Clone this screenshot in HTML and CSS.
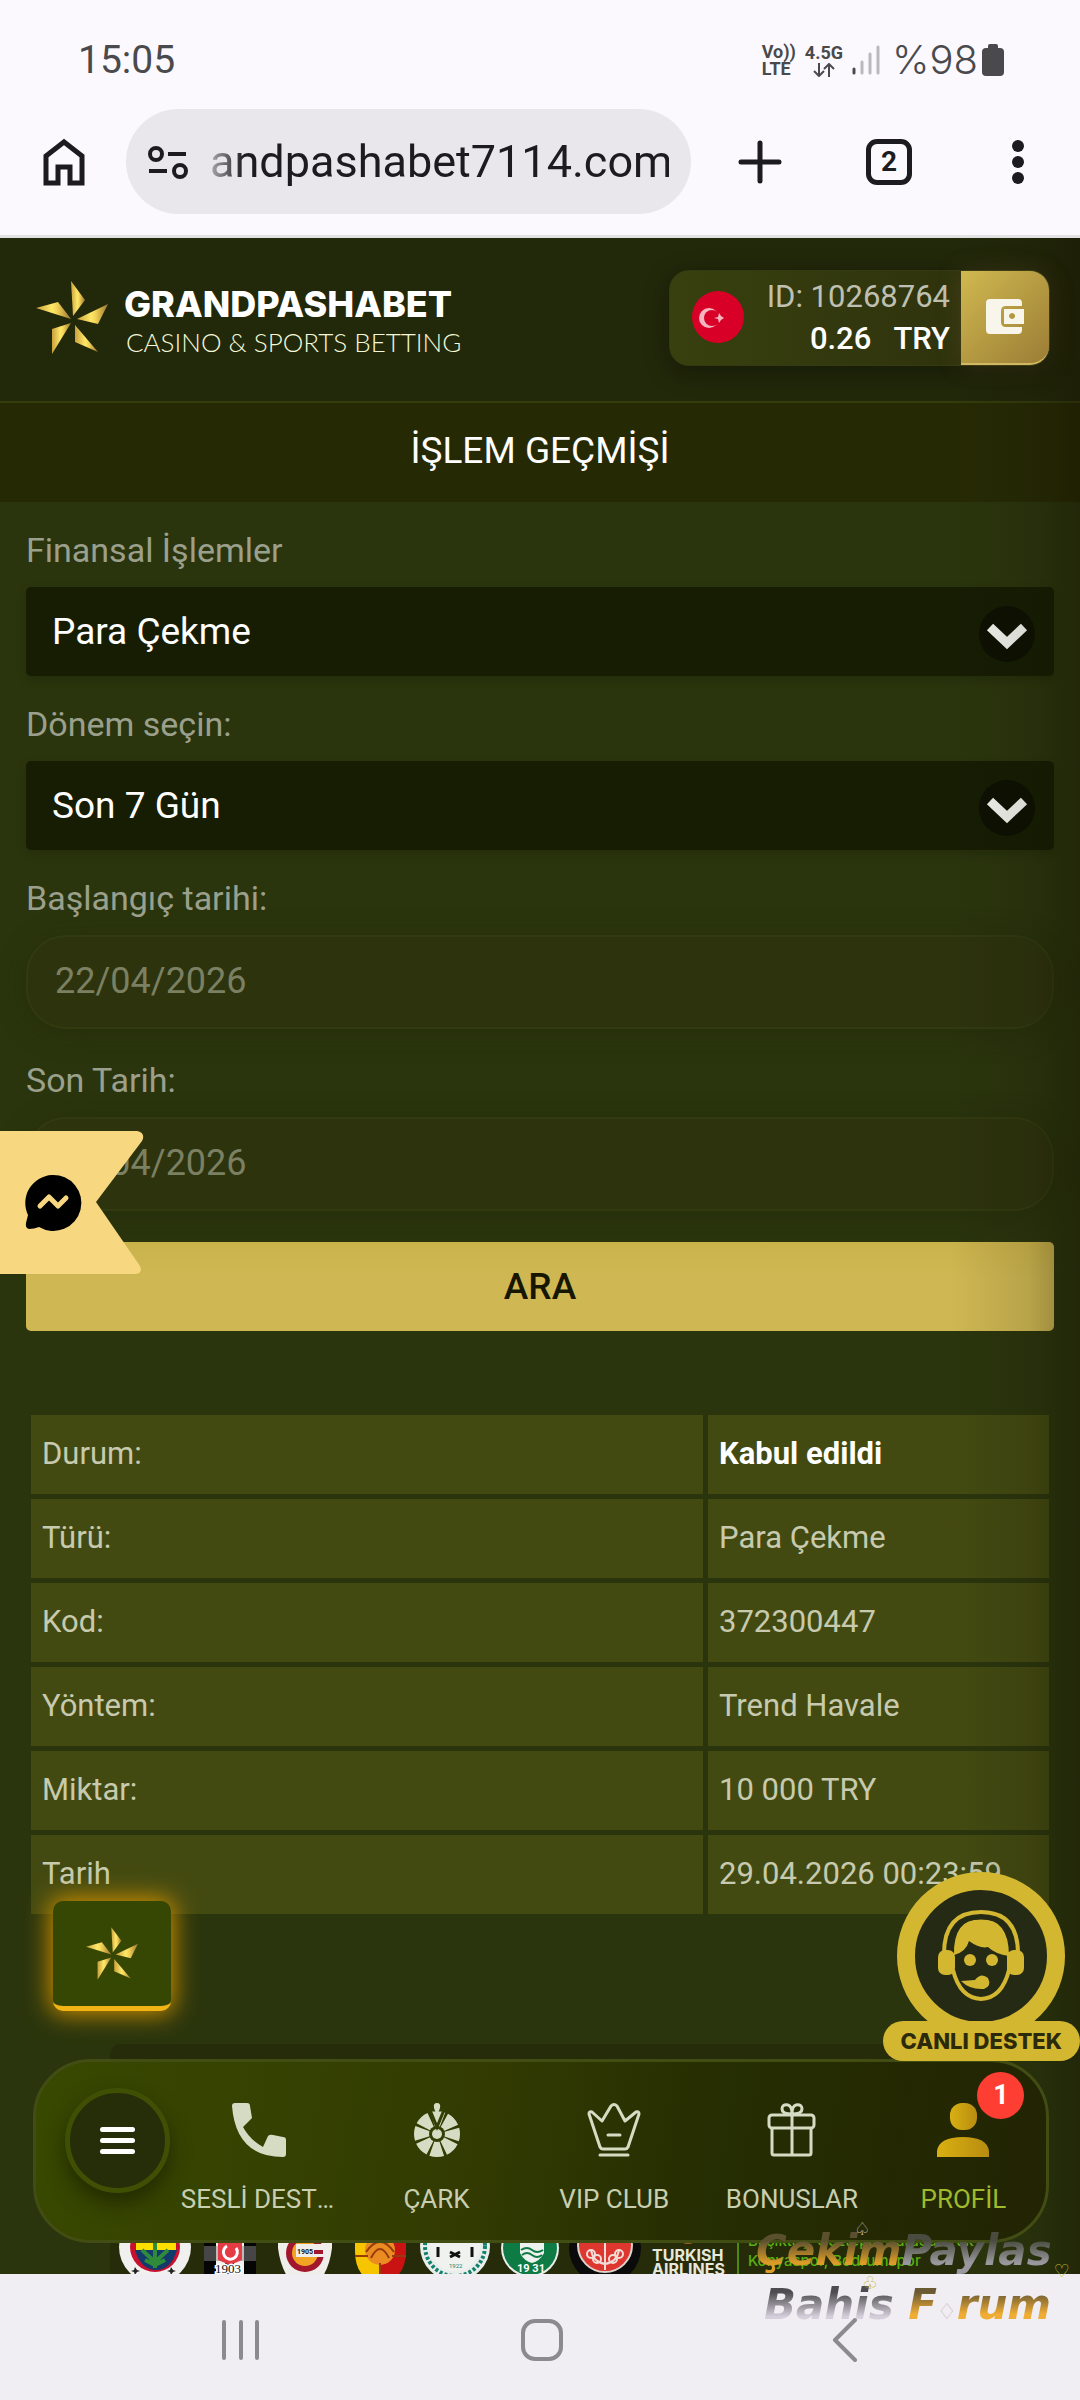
FILE: index.html
```html
<!DOCTYPE html>
<html lang="tr">
<head>
  <meta charset="utf-8">
  <title>İşlem Geçmişi</title>
  <link rel="stylesheet" href="styles.css">
</head>
<body>
  <!-- shared shapes -->
  <svg class="defs" width="0" height="0">
    <defs>
      <linearGradient id="gold" x1="0" y1="0" x2="1" y2="0">
        <stop offset="0" stop-color="#c9a03c"/>
        <stop offset="0.45" stop-color="#ffe868"/>
        <stop offset="0.6" stop-color="#f3d355"/>
        <stop offset="1" stop-color="#9a7430"/>
      </linearGradient>
      <linearGradient id="person" x1="0" y1="0" x2="1" y2="0">
        <stop offset="0" stop-color="#d9b012"/>
        <stop offset="1" stop-color="#b88c10"/>
      </linearGradient>
      <symbol id="pinwheel" viewBox="0 0 72 73">
        <path fill="url(#gold)" d="M35 0L49 19 37 35z"/>
        <path fill="url(#gold)" d="M0 27L22 21 35 38z"/>
        <path fill="url(#gold)" d="M72 23L62 43 41 38z"/>
        <path fill="url(#gold)" d="M16 48L35 42 16 73z"/>
        <path fill="url(#gold)" d="M39 44L62 71 39 61z"/>
      </symbol>
    </defs>
  </svg>

  <div class="status">
    <span class="clock">15:05</span>
    <div class="status-icons">
      <span class="tiny">Vo))<br>LTE</span>
      <span class="tiny">4.5G
        <svg width="24" height="14" viewBox="0 0 24 14" fill="none" stroke="#4a4a4c" stroke-width="2"><path d="M7 0v12M2 8l5 5 5-5M17 14V2M12 6l5-5 5 5"/></svg>
      </span>
      <svg width="28" height="32" viewBox="0 0 28 32" stroke-width="3" stroke-linecap="round"><path stroke="#4a4a4c" d="M2 25v4"/><path stroke="#b9b9bd" d="M10 18v11M18 10v19M26 3v26"/></svg>
      <span class="percent">%98</span>
      <svg class="battery" width="22" height="32" viewBox="0 0 22 32" fill="#4a4a4c"><rect x="6" width="10" height="8" rx="2"/><rect y="4" width="22" height="28" rx="4"/></svg>
    </div>
  </div>

  <div class="browser">
    <button class="tool" aria-label="Ana sayfa"><svg width="44" height="48" viewBox="0 0 44 48" fill="none" stroke="#1b1b20" stroke-width="5"><path d="M4 45V18L22 4l18 14v27H28V29H16v16z"/></svg></button>
    <div class="address">
      <svg width="40" height="34" viewBox="0 0 40 34" fill="none" stroke="#1b1b20" stroke-width="4"><circle cx="8" cy="9" r="6"/><path d="M20 9h18M1 26h18"/><circle cx="32" cy="26" r="6"/></svg>
      <input type="text" aria-label="Adres" value="andpashabet7114.com">
    </div>
    <div class="tools">
      <button class="tool" aria-label="Yeni sekme"><svg width="44" height="44" viewBox="0 0 44 44" stroke="#1b1b20" stroke-width="5" stroke-linecap="round"><path d="M22 3v38M3 22h38"/></svg></button>
      <button class="tool tabs">2</button>
      <button class="tool" aria-label="Menü"><svg width="44" height="44" viewBox="0 0 44 44" fill="#1b1b20"><circle cx="22" cy="6" r="6"/><circle cx="22" cy="22" r="6"/><circle cx="22" cy="38" r="6"/></svg></button>
    </div>
  </div>

  <div class="site">
    <header class="header">
      <a class="logo" href="#">
        <svg width="72" height="73"><use href="#pinwheel"/></svg>
        <span>
          <span class="logo-name">GRANDPASHABET</span>
          <span class="logo-sub">CASINO &amp; SPORTS BETTING</span>
        </span>
      </a>
      <div class="account">
        <svg width="53" height="53" viewBox="0 0 53 53"><circle cx="26" cy="26" r="26" fill="#d80027"/><circle cx="17" cy="27" r="10" fill="#f5b5c0"/><circle cx="20" cy="27" r="8" fill="#d80027"/><path fill="#f5b5c0" d="M22 27l4-1 1-4 2 3 3 2-3 2-2 3-1-4z"/></svg>
        <div class="account-text">
          <span class="account-id">ID: 10268764</span>
          <span class="balance"><b>0.26</b><b>TRY</b></span>
        </div>
        <button class="wallet" aria-label="Cüzdan"><svg width="38" height="35" viewBox="0 0 38 35"><path fill="#f8f5ea" d="M4 0h28q4 0 4 4v3H20q-5 0-5 5v11q0 5 5 5h16v3q0 4-4 4H4q-4 0-4-4V4q0-4 4-4z"/><path fill="#f8f5ea" fill-rule="evenodd" d="M18 10h20v15H18zM26 14a3 3 0 1 0 .1 0z"/></svg></button>
      </div>
    </header>

    <h1 class="title">İŞLEM GEÇMİŞİ</h1>

    <main class="main">
      <form class="filter">
        <label for="type">Finansal İşlemler</label>
        <div class="select">
          <select id="type"><option>Para Çekme</option></select>
          <svg width="56" height="56" viewBox="0 0 56 56"><circle cx="28" cy="28" r="28" fill="#0d1002"/><path fill="none" stroke="#f4f5f0" stroke-width="9" d="M11 21l17 16 17-16"/></svg>
        </div>

        <label for="period">Dönem seçin:</label>
        <div class="select">
          <select id="period"><option>Son 7 Gün</option></select>
          <svg width="56" height="56" viewBox="0 0 56 56"><circle cx="28" cy="28" r="28" fill="#0d1002"/><path fill="none" stroke="#f4f5f0" stroke-width="9" d="M11 21l17 16 17-16"/></svg>
        </div>

        <label for="start">Başlangıç tarihi:</label>
        <input class="date" id="start" type="text" value="22/04/2026">

        <label for="end">Son Tarih:</label>
        <input class="date" id="end" type="text" value="29/04/2026">

        <button class="search" type="button">ARA</button>
      </form>

      <table class="history">
        <tr><td>Durum:</td><td><b>Kabul edildi</b></td></tr>
        <tr><td>Türü:</td><td>Para Çekme</td></tr>
        <tr><td>Kod:</td><td>372300447</td></tr>
        <tr><td>Yöntem:</td><td>Trend Havale</td></tr>
        <tr><td>Miktar:</td><td>10 000 TRY</td></tr>
        <tr><td>Tarih</td><td>29.04.2026 00:23:59</td></tr>
      </table>
    </main>

    <footer class="sponsors">
      <svg width="75" height="75" viewBox="0 0 75 75"><circle cx="37" cy="37" r="36" fill="#f0f0ee"/><circle cx="37" cy="37" r="25" fill="#c8102e"/><path fill="#ffe000" d="M18 22h40v18H18z"/><path fill="#123a6b" d="M17 40h42q-6 20-21 20T17 40z"/><path fill="none" stroke="#2f8b3a" stroke-width="4" d="M37 30v28M24 40l13 12 13-12M27 50l10 5 10-5"/><path fill="#222" d="M17 57l2 3 3 1-3 1-2 3-1-3-3-1 3-1zM53 57l2 3 3 1-3 1-2 3-1-3-3-1 3-1z"/></svg>
      <svg width="75" height="75" viewBox="0 0 75 75"><rect x="11" y="6" width="52" height="69" rx="14" fill="#050505"/><path fill="#f0f0f0" d="M23 6h9v69h-9zM41 6h10v69H41z"/><path fill="#888" opacity=".5" d="M11 36h52v15H11z"/><path fill="#e43b44" d="M25 28h24v22l-12 5-12-5z"/><path fill="none" stroke="#fff" stroke-width="3" d="M43 38a7 7 0 1 1-9-2"/><text x="22" y="63" font-family="Liberation Serif" font-size="13" fill="#111" stroke="#fff" stroke-width="3" paint-order="stroke">1903</text></svg>
      <svg width="75" height="75" viewBox="0 0 75 75"><path fill="#f0eeea" d="M10 20h54v18q-3 24-16 37H26Q13 62 10 38z"/><circle cx="37" cy="43" r="19" fill="#a3172c"/><circle cx="37" cy="43" r="13" fill="#f3a324"/><path fill="#f0eeea" d="M28 34h30v13H28z"/><path fill="none" stroke="#a3172c" stroke-width="4" d="M46 42h9"/><text x="29" y="44" font-family="Roboto" font-weight="700" font-size="7" fill="#111">1905</text></svg>
      <svg width="75" height="75" viewBox="0 0 75 75"><path fill="#f7c400" d="M12 20h25v55q-25-6-25-34z"/><path fill="#c91212" d="M37 20h26v21q0 28-26 34z"/><circle cx="37" cy="40" r="15" fill="#eb8c22"/><path fill="none" stroke="#983b0c" stroke-width="2" d="M12 46h13M49 46h14M37 53v20M23 42q14-20 28 0M28 48q9-18 18 0"/></svg>
      <svg width="75" height="75" viewBox="0 0 75 75"><circle cx="37" cy="36" r="35" fill="#e9eeec"/><circle cx="37" cy="36" r="30" fill="none" stroke="#13826a" stroke-width="4" stroke-dasharray="3 2"/><circle cx="37" cy="36" r="25" fill="#f0f2f0"/><path fill="none" stroke="#111" stroke-width="3" d="M20 37v10M54 37v10M32 42l10 5M42 42l-10 5"/><text x="31" y="58" font-family="Roboto" font-size="6" fill="#13826a">1922</text></svg>
      <svg width="75" height="75" viewBox="0 0 75 75"><circle cx="37" cy="38" r="29" fill="#e9eeec"/><circle cx="37" cy="38" r="27" fill="#0e7b45"/><path fill="#eef2ee" d="M27 33h24v10q-4 8-12 10-8-2-12-10z"/><path fill="none" stroke="#0e7b45" stroke-width="2" d="M28 40q6-4 11 0t11 0M29 45q5-4 10 0t10 0"/><text x="24" y="62" font-family="Roboto" font-weight="700" font-size="11" fill="#fff">19 31</text></svg>
      <svg width="75" height="75" viewBox="0 0 75 75"><circle cx="37" cy="38" r="36" fill="#0b0b0b"/><circle cx="37" cy="35" r="27" fill="#dd3730" stroke="#ded3cc" stroke-width="2"/><path fill="none" stroke="#f4dcd6" stroke-width="2" d="M37 30v30M37 54q-12-2-14-14M37 54q12-2 14-14"/><g fill="none" stroke="#f4dcd6" stroke-width="2"><circle cx="23" cy="44" r="4"/><circle cx="29" cy="49" r="4"/><circle cx="51" cy="44" r="4"/><circle cx="45" cy="49" r="4"/></g></svg>
      <div class="airline"><i></i>TURKISH<br>AIRLINES</div>
      <div class="partners">Beşiktaş, Göztepe, Karagümrük<br>Konyaspor, Bodrumspor<br><span>Resmi Sponsoru</span></div>
    </footer>

    <a class="messenger" href="#" aria-label="Messenger">
      <svg width="144" height="143" viewBox="0 0 144 143"><path fill="#f7d780" d="M0 0h137q9 2 5 10L96 71l44 64q3 7-4 8H0z"/><path fill="#000" d="M52 44a28 28 0 1 1-13 52q-5 2-10 2-4-1-3-6l2-8A28 28 0 0 1 52 44z"/><path fill="none" stroke="#f7d780" stroke-width="5" stroke-linecap="round" stroke-linejoin="round" d="M40 75l9-9 9 9 8-8"/></svg>
    </a>

    <button class="spin" aria-label="Çark"><svg width="52" height="53"><use href="#pinwheel"/></svg></button>

    <a class="support" href="#">
      <svg width="168" height="168" viewBox="0 0 168 168">
        <circle cx="84" cy="84" r="75" fill="#252a15" stroke="#d3b731" stroke-width="18"/>
        <path fill="#d3b731" d="M57 83q-1-36 27-36t28 37q-14-2-21-9-8 2-19-6-3 11-15 14z"/>
        <path fill="none" stroke="#d3b731" stroke-width="4" d="M47 82q0-42 37-42t37 42"/>
        <path fill="none" stroke="#252a15" stroke-width="3" d="M52 78q1-32 32-32t32 32"/>
        <rect x="41" y="78" width="17" height="25" rx="7" fill="#d3b731"/>
        <rect x="110" y="78" width="17" height="25" rx="7" fill="#d3b731"/>
        <path fill="none" stroke="#d3b731" stroke-width="4" d="M56 98q7 28 28 29 21-1 28-29V80"/>
        <circle cx="73" cy="88" r="6" fill="#d3b731"/><circle cx="95" cy="88" r="6" fill="#d3b731"/>
        <path fill="#d3b731" d="M64 109l14-1q6-8 13-2 4 8-4 11-14 1-23-8z"/>
      </svg>
      <span>CANLI DESTEK</span>
    </a>

    <nav class="nav">
      <button class="menu" aria-label="Menü"><i></i><i></i><i></i></button>
      <a href="#">
        <svg width="54" height="54" viewBox="0 0 54 54" fill="#d6dcc4"><path d="M3 0h12q3 0 3 3l2 12-9 9q7 13 20 20l5-11q2-2 5-1l10 2q3 0 3 3v14q0 3-3 3Q4 54 0 3 0 0 3 0z"/></svg>
        <span>SESLİ DESTEK</span>
      </a>
      <a href="#">
        <svg width="54" height="54" viewBox="0 0 54 54"><circle cx="27" cy="31" r="15" fill="none" stroke="#d6dcc4" stroke-width="16" stroke-dasharray="9.8 2" stroke-dashoffset="4.9"/><circle cx="27" cy="31" r="8" fill="#323f05"/><circle cx="27" cy="31" r="5" fill="#d6dcc4"/><path fill="#d6dcc4" stroke="#323f05" stroke-width="3" d="M27 24l-7-17h14z"/><path fill="#d6dcc4" d="M27 0q4 0 3 5l-3 8-3-8q-1-5 3-5z"/></svg>
        <span>ÇARK</span>
      </a>
      <a href="#">
        <svg width="54" height="54" viewBox="0 0 54 54" fill="none" stroke="#d6dcc4" stroke-width="3" stroke-linejoin="round" stroke-linecap="round"><path d="M13 44L2 11q0-3 3-2l10 9 9-15q3-3 6 0l8 15 11-9q3-1 3 2L41 44q-1 2-3 2H16q-2 0-3-2zM13 52h28M21 32h12"/></svg>
        <span>VIP CLUB</span>
      </a>
      <a href="#">
        <svg width="54" height="54" viewBox="0 0 54 54" fill="none" stroke="#d6dcc4" stroke-width="3"><rect x="4" y="12" width="45" height="13" rx="3"/><path d="M7 25v25q0 2 2 2h35q2 0 2-2V25M27 12v40M27 11q-10 0-10-5t6-4q4 1 4 9zM27 11q10 0 10-5t-6-4q-4 1-4 9z"/></svg>
        <span>BONUSLAR</span>
      </a>
      <a class="active" href="#">
        <svg width="54" height="54" viewBox="0 0 54 54" fill="url(#person)"><rect x="14" y="0" width="27" height="27" rx="12"/><path d="M1 54V48Q3 34 27 34t26 14v6z"/></svg>
        <span>PROFİL</span>
        <b class="badge">1</b>
      </a>
    </nav>
  </div>

  <div class="system">
    <button aria-label="Son uygulamalar"><svg width="44" height="44" viewBox="0 0 44 44" stroke="#8c8a8e" stroke-width="4" stroke-linecap="round"><path d="M5 4v36M22 4v36M38 4v36"/></svg></button>
    <button aria-label="Ana ekran"><svg width="44" height="44" viewBox="0 0 44 44" fill="none" stroke="#8c8a8e" stroke-width="4"><rect x="3" y="3" width="38" height="38" rx="12"/></svg></button>
    <button aria-label="Geri"><svg width="44" height="44" viewBox="0 0 44 44" fill="none" stroke="#8c8a8e" stroke-width="4" stroke-linecap="round" stroke-linejoin="round"><path d="M34 2L14 22l20 20"/></svg></button>
    <div class="stamp">
      <p><span class="amber">Çekim</span><span class="grey">Paylas</span></p>
      <p class="second"><span class="silver">Bahis</span> <span class="bronze">F</span><small>♢</small><span class="bronze">rum</span></p>
      <i class="suit spade">♤</i>
      <i class="suit club">♧</i>
      <i class="suit heart">♡</i>
    </div>
  </div>
</body>
</html>
```

FILE: styles.css
```css
* {
  box-sizing: border-box;
}
body {
  margin: 0;
  min-height: 100vh;
  display: flex;
  flex-direction: column;
  font-family: Roboto, "Open Sans", sans-serif;
  background: #2a350d;
  color: #fff;
}
button {
  border: 0;
  padding: 0;
  background: none;
  font-family: inherit;
}
a {
  color: inherit;
  text-decoration: none;
}
svg {
  display: block;
  flex: none;
}
.defs {
  position: absolute;
}

/* phone status bar */
.status {
  display: flex;
  justify-content: space-between;
  padding: 37px 76px 0 78px;
  background: #fbf9fe;
  color: #4a4a4c;
}
.clock {
  font-size: 39px;
  line-height: 46px;
}
.percent {
  margin-left: 3px;
  font: 300 40px/46px Inter, sans-serif;
}
.status-icons {
  display: flex;
  align-items: center;
  gap: 9px;
}
.battery {
  margin-left: -5px;
}
.tiny {
  font-size: 18px;
  font-weight: 700;
  line-height: 17px;
}
.tiny svg {
  margin: 2px auto 0;
}

/* browser toolbar */
.browser {
  display: flex;
  align-items: center;
  padding: 26px 40px 21px 42px;
  background: #fbf9fe;
  border-bottom: 3px solid #e2e2e3;
}
.address {
  flex: 1;
  min-width: 0;
  display: flex;
  align-items: center;
  gap: 22px;
  height: 105px;
  margin: 0 47px 0 40px;
  padding: 0 22px;
  border-radius: 53px;
  background: #e9e7ec;
}
.address input {
  flex: 1;
  min-width: 0;
  border: 0;
  padding: 0;
  background: none;
  color: #1b1b20;
  font: 45px Roboto, sans-serif;
  text-align: right;
  -webkit-mask-image: linear-gradient(to right, rgba(0,0,0,.3), #000 34px);
  mask-image: linear-gradient(to right, rgba(0,0,0,.3), #000 34px);
}
.tools {
  display: flex;
  gap: 84px;
}
.tabs {
  width: 46px;
  height: 46px;
  border: 5px solid #1b1b20;
  border-radius: 11px;
  color: #1b1b20;
  font-size: 28px;
  font-weight: 700;
  line-height: 36px;
}

/* site */
.site {
  flex: 1;
  display: flex;
  flex-direction: column;
  position: relative;
  overflow: hidden;
}
.site::before {
  content: "";
  position: absolute;
  top: 0;
  right: 0;
  bottom: 0;
  width: 130px;
  background: linear-gradient(to right, transparent, rgba(20,16,0,.12) 60%, rgba(20,16,0,.36));
  pointer-events: none;
  z-index: 1;
}
.header {
  display: flex;
  justify-content: space-between;
  align-items: center;
  height: 165px;
  padding: 0 30px 4px 36px;
  background: #22280a;
  border-bottom: 2px solid #343c0c;
}
.logo {
  display: flex;
  align-items: center;
  gap: 16px;
}
.logo-name, .logo-sub {
  display: block;
}
.logo-name {
  padding-top: 6px;
  font: 800 36px/42px Inter, sans-serif;
}
.logo-sub {
  padding-left: 2px;
  font: 300 26px/34px Lato, sans-serif;
  color: #f4f8d8;
}
.account {
  position: relative;
  z-index: 2;
  display: flex;
  align-items: center;
  height: 96px;
  padding-left: 22px;
  border: 1px solid #343a12;
  border-radius: 20px;
  background: linear-gradient(to right, #38400e, #2c2f0d);
  box-shadow: 0 6px 24px rgba(0,0,0,.35);
}
.account-text {
  display: flex;
  flex-direction: column;
  margin: 0 11px 0 22px;
  font-size: 31px;
  line-height: 42px;
  text-align: right;
}
.account-id {
  color: #bfc0b2;
}
.balance {
  display: flex;
  justify-content: flex-end;
  gap: 22px;
}
.balance b {
  font-weight: 500;
}
.wallet {
  display: flex;
  align-items: center;
  justify-content: center;
  width: 88px;
  height: 94px;
  border-radius: 0 19px 19px 0;
  border-bottom: 2px solid #d3b863;
  background: linear-gradient(135deg, #d0b850, #9b7d35);
  box-shadow: 0 0 24px rgba(120,90,50,.3);
}
.title {
  margin: 0;
  background: #262a04;
  font-size: 37px;
  font-weight: 400;
  line-height: 95px;
  padding-bottom: 4px;
  text-align: center;
}
.main {
  padding: 28px 26px 0;
}
.filter label {
  display: block;
  margin-bottom: 17px;
  color: #9ba08d;
  font-size: 34px;
  line-height: 40px;
}
.select {
  position: relative;
  margin-bottom: 28px;
}
.select select {
  display: block;
  width: 100%;
  height: 89px;
  padding: 0 100px 0 26px;
  border: 0;
  border-radius: 5px;
  background: #161d03;
  color: #fff;
  font: 37px Roboto, sans-serif;
  appearance: none;
  box-shadow: 0 4px 10px rgba(0,0,0,.15);
}
.select svg {
  position: absolute;
  right: 19px;
  top: 19px;
  pointer-events: none;
}
.date {
  display: block;
  width: 100%;
  height: 94px;
  margin-bottom: 31px;
  padding: 0 27px 2px;
  border: 2px solid #313a11;
  border-radius: 40px;
  background: #2d330d;
  color: #7b8063;
  font: 36px Roboto, sans-serif;
  box-shadow: 0 4px 30px rgba(30,30,0,.3);
}
.search {
  width: 100%;
  height: 89px;
  border-radius: 5px;
  background: linear-gradient(#cab24b, #cfb853 40%);
  color: #171600;
  font-size: 37px;
  font-weight: 500;
}
.history {
  width: 100%;
  margin-top: 79px;
  border-spacing: 5px;
  table-layout: fixed;
}
.history td {
  height: 79px;
  padding: 0 11px 2px;
  background: #434a11;
  color: #c7caae;
  font-size: 31px;
}
.history td:last-child {
  width: 341px;
}
.history b {
  color: #fff;
}

/* sponsor strip, runs under the bottom nav */
.sponsors {
  flex: 1;
  display: flex;
  align-items: flex-end;
  min-height: 226px;
  margin: 125px 110px 0;
  padding-left: 8px;
  border-radius: 10px 10px 0 0;
  background: #262c09;
  white-space: nowrap;
}
.sponsors > svg {
  margin-bottom: -11px;
}
.airline {
  margin: 0 12px -2px 9px;
  font: 700 16px/14px Inter, sans-serif;
  color: #e6e8dc;
}
.airline i {
  display: block;
  width: 26px;
  height: 26px;
  margin: 0 auto 4px;
  border-radius: 50%;
  background: #b5641c;
}
.partners {
  margin-bottom: -17px;
  padding-left: 9px;
  border-left: 2px solid #4f8a10;
  font: 500 15px/20px Inter, sans-serif;
  color: #58b010;
}
.partners span {
  color: #fff;
}

/* floating pieces */
.messenger {
  position: absolute;
  left: 0;
  top: 893px;
  z-index: 3;
}
.spin {
  position: absolute;
  left: 53px;
  bottom: 263px;
  z-index: 3;
  display: flex;
  align-items: center;
  justify-content: center;
  width: 118px;
  height: 110px;
  border-bottom: 5px solid #f0b414;
  border-radius: 10px;
  background: #364603;
  box-shadow: 0 0 24px 3px #d09000;
}
.support {
  position: absolute;
  right: 0;
  bottom: 213px;
  z-index: 5;
  display: flex;
  flex-direction: column;
  align-items: center;
}
.support span {
  margin-top: -19px;
  padding: 0 18px;
  border-radius: 20px;
  background: #d3b731;
  color: #2b2a0a;
  font: 800 22px/40px Inter, sans-serif;
}
.nav {
  position: absolute;
  left: 33px;
  right: 31px;
  bottom: 31px;
  z-index: 4;
  display: flex;
  align-items: center;
  height: 184px;
  padding: 16px 0 0 29px;
  border: 3px solid #424d14;
  border-radius: 58px;
  background: linear-gradient(100deg, #384900, #323a02 45%, #262e02 65%, #222403);
}
.menu {
  display: flex;
  flex-direction: column;
  align-items: center;
  justify-content: center;
  gap: 6px;
  flex: none;
  width: 105px;
  height: 105px;
  margin-bottom: 38px;
  border: 5px solid #3f5004;
  border-radius: 50%;
  background: #262d09;
  box-shadow: 0 10px 20px rgba(20,25,0,.6);
}
.menu i {
  width: 35px;
  height: 5px;
  border-radius: 3px;
  background: #fff;
}
.nav a {
  position: relative;
  flex: 100;
  min-width: 0;
  display: flex;
  flex-direction: column;
  align-items: center;
  gap: 26px;
  color: #c8cfb0;
  font-size: 26px;
  line-height: 32px;
}
.nav a span {
  max-width: 156px;
  overflow: hidden;
  white-space: nowrap;
  text-overflow: ellipsis;
}
.nav .active {
  flex: 93;
  color: #9fba2c;
}
.badge {
  position: absolute;
  left: 50%;
  top: -31px;
  width: 47px;
  height: 47px;
  margin-left: 14px;
  border-radius: 50%;
  background: #ff3e33;
  color: #fff;
  font-size: 27px;
  line-height: 47px;
  text-align: center;
}

/* android buttons */
.system {
  position: relative;
  z-index: 6;
  display: flex;
  justify-content: space-around;
  align-items: center;
  height: 126px;
  padding: 6px 86px 0 90px;
  background: #f0eef2;
}
.stamp {
  position: absolute;
  right: 0;
  top: -50px;
  width: 324px;
  font: italic 700 42px/54px "DejaVu Sans", sans-serif;
  white-space: nowrap;
}
.stamp p {
  margin: 0;
}
.stamp .second {
  padding-left: 8px;
}
.stamp span {
  -webkit-background-clip: text;
  background-clip: text;
  color: transparent;
}
.amber {
  background-image: linear-gradient(#5a5030 30%, #dd9c28 75%);
}
.grey {
  background-image: linear-gradient(#4a4c40 30%, #9a989e 75%);
}
.silver {
  background-image: linear-gradient(#4e4c50 25%, #d5cfdb 75%);
}
.bronze {
  background-image: linear-gradient(#6a5a34 25%, #f0ad34 70%);
}
.stamp small {
  font-size: 22px;
  color: #c9b9c0;
}
.suit {
  position: absolute;
  font: 18px/18px "DejaVu Sans", sans-serif;
  color: #c8ba2c;
}
.spade {
  left: 98px;
  top: -4px;
  color: #cbbfae;
}
.club {
  left: 106px;
  top: 50px;
}
.heart {
  right: 10px;
  top: 38px;
}
```
